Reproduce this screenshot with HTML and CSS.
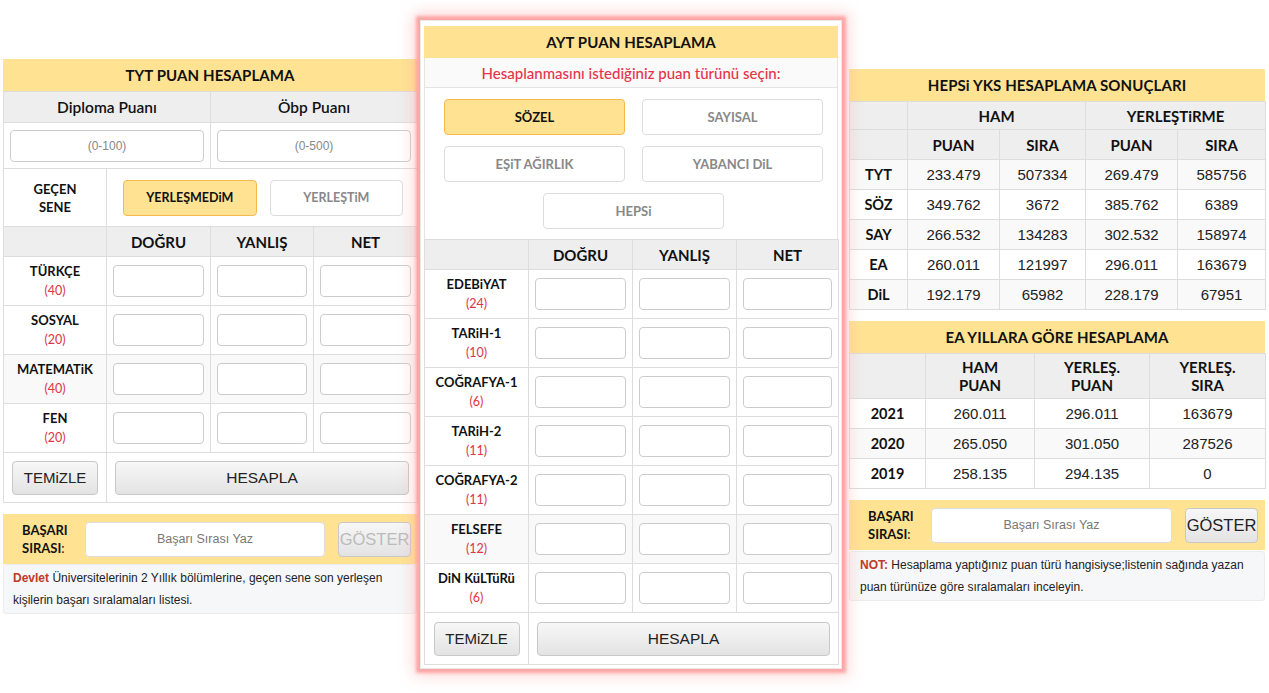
FILE: index.html
```html
<!DOCTYPE html>
<html lang="tr">
<head>
<meta charset="utf-8">
<title>YKS Puan Hesaplama</title>
<link rel="stylesheet" href="styles.css">
</head>
<body>
<div class="page">
  <section class="panel panel-tyt">
    <div class="panel-title">TYT PUAN HESAPLAMA</div>
    <table class="grid grid-4">
      <colgroup><col class="w103"><col class="w104"><col class="w103"><col class="w104"></colgroup>
      <tr class="r-head">
        <th colspan="2" class="big">Diploma Puanı</th>
        <th colspan="2" class="big">Öbp Puanı</th>
      </tr>
      <tr class="r-inputs">
        <td colspan="2"><input class="field field-wide" placeholder="(0-100)"></td>
        <td colspan="2"><input class="field field-wide" placeholder="(0-500)"></td>
      </tr>
      <tr class="r-choice">
        <th class="lbl">GEÇEN<br>SENE</th>
        <td colspan="3">
          <div class="choice">
            <button class="opt active">YERLEŞMEDiM</button>
            <button class="opt">YERLEŞTiM</button>
          </div>
        </td>
      </tr>
      <tr class="r-colhead"><th></th><th>DOĞRU</th><th>YANLIŞ</th><th>NET</th></tr>
      <tr class="r-subj"><th class="lbl">TÜRKÇE<span class="cnt">(40)</span></th><td><input class="field"></td><td><input class="field"></td><td><input class="field"></td></tr>
      <tr class="r-subj"><th class="lbl">SOSYAL<span class="cnt">(20)</span></th><td><input class="field"></td><td><input class="field"></td><td><input class="field"></td></tr>
      <tr class="r-subj alt"><th class="lbl">MATEMATiK<span class="cnt">(40)</span></th><td><input class="field"></td><td><input class="field"></td><td><input class="field"></td></tr>
      <tr class="r-subj"><th class="lbl">FEN<span class="cnt">(20)</span></th><td><input class="field"></td><td><input class="field"></td><td><input class="field"></td></tr>
      <tr class="r-actions">
        <td><button class="btn btn-clear">TEMiZLE</button></td>
        <td colspan="3"><button class="btn btn-calc">HESAPLA</button></td>
      </tr>
    </table>
    <div class="rank-bar">
      <div class="rank-label">BAŞARI<br>SIRASI<span class="colon">:</span></div>
      <input class="rank-input" placeholder="Başarı Sırası Yaz">
      <button class="btn btn-show" disabled>GÖSTER</button>
    </div>
    <div class="note"><div class="note-line"><b class="red">Devlet</b> <span>Üniversitelerinin 2 Yıllık bölümlerine, geçen sene son yerleşen</span></div><div class="note-line">kişilerin başarı sıralamaları listesi.</div></div>
  </section>

  <section class="panel panel-ayt">
    <div class="panel-title">AYT PUAN HESAPLAMA</div>
    <div class="prompt">Hesaplanmasını istediğiniz puan türünü seçin:</div>
    <div class="types">
      <button class="opt active">SÖZEL</button>
      <button class="opt">SAYISAL</button>
      <button class="opt">EŞiT AĞIRLIK</button>
      <button class="opt">YABANCI DiL</button>
      <button class="opt opt-all">HEPSi</button>
    </div>
    <table class="grid grid-4 grid-ayt">
      <colgroup><col class="w104"><col class="w104"><col class="w104"><col class="w102"></colgroup>
      <tr class="r-colhead"><th></th><th>DOĞRU</th><th>YANLIŞ</th><th>NET</th></tr>
      <tr class="r-subj"><th class="lbl">EDEBiYAT<span class="cnt">(24)</span></th><td><input class="field"></td><td><input class="field"></td><td><input class="field"></td></tr>
      <tr class="r-subj"><th class="lbl">TARiH-1<span class="cnt">(10)</span></th><td><input class="field"></td><td><input class="field"></td><td><input class="field"></td></tr>
      <tr class="r-subj"><th class="lbl">COĞRAFYA-1<span class="cnt">(6)</span></th><td><input class="field"></td><td><input class="field"></td><td><input class="field"></td></tr>
      <tr class="r-subj"><th class="lbl">TARiH-2<span class="cnt">(11)</span></th><td><input class="field"></td><td><input class="field"></td><td><input class="field"></td></tr>
      <tr class="r-subj"><th class="lbl">COĞRAFYA-2<span class="cnt">(11)</span></th><td><input class="field"></td><td><input class="field"></td><td><input class="field"></td></tr>
      <tr class="r-subj alt"><th class="lbl">FELSEFE<span class="cnt">(12)</span></th><td><input class="field"></td><td><input class="field"></td><td><input class="field"></td></tr>
      <tr class="r-subj"><th class="lbl">DiN KüLTüRü<span class="cnt">(6)</span></th><td><input class="field"></td><td><input class="field"></td><td><input class="field"></td></tr>
      <tr class="r-actions">
        <td><button class="btn btn-clear">TEMiZLE</button></td>
        <td colspan="3"><button class="btn btn-calc">HESAPLA</button></td>
      </tr>
    </table>
  </section>

  <section class="panel panel-res">
    <div class="panel-title">HEPSi YKS HESAPLAMA SONUÇLARI</div>
    <table class="grid res res-1">
      <colgroup><col class="w58"><col class="w92"><col class="w86"><col class="w92"><col class="w88"></colgroup>
      <tr class="r-h"><th></th><th colspan="2">HAM</th><th colspan="2">YERLEŞTiRME</th></tr>
      <tr class="r-h r-h-b"><th></th><th>PUAN</th><th>SIRA</th><th>PUAN</th><th>SIRA</th></tr>
      <tr class="alt"><th>TYT</th><td>233.479</td><td>507334</td><td>269.479</td><td>585756</td></tr>
      <tr><th>SÖZ</th><td>349.762</td><td>3672</td><td>385.762</td><td>6389</td></tr>
      <tr class="alt"><th>SAY</th><td>266.532</td><td>134283</td><td>302.532</td><td>158974</td></tr>
      <tr><th>EA</th><td>260.011</td><td>121997</td><td>296.011</td><td>163679</td></tr>
      <tr class="alt"><th>DiL</th><td>192.179</td><td>65982</td><td>228.179</td><td>67951</td></tr>
    </table>

    <div class="panel-title title-2">EA YILLARA GÖRE HESAPLAMA</div>
    <table class="grid res res-2">
      <colgroup><col class="w76"><col class="w109"><col class="w115"><col class="w116"></colgroup>
      <tr class="r-h2"><th></th><th>HAM<br>PUAN</th><th>YERLEŞ.<br>PUAN</th><th>YERLEŞ.<br>SIRA</th></tr>
      <tr><th>2021</th><td>260.011</td><td>296.011</td><td>163679</td></tr>
      <tr class="alt"><th>2020</th><td>265.050</td><td>301.050</td><td>287526</td></tr>
      <tr><th>2019</th><td>258.135</td><td>294.135</td><td>0</td></tr>
    </table>

    <div class="rank-bar rank-bar-r">
      <div class="rank-label">BAŞARI<br>SIRASI<span class="colon">:</span></div>
      <input class="rank-input" placeholder="Başarı Sırası Yaz">
      <button class="btn btn-show">GÖSTER</button>
    </div>
    <div class="note note-r"><div class="note-line"><b class="red">NOT:</b> <span>Hesaplama yaptığınız puan türü hangisiyse;listenin sağında yazan</span></div><div class="note-line">puan türünüze göre sıralamaları inceleyin.</div></div>
  </section>
</div>
</body>
</html>
```
FILE: styles.css
```css
* { box-sizing: border-box; }
html, body { margin: 0; padding: 0; background: #fff; }
body {
  font-family: "Lato", "Noto Sans", sans-serif;
  color: #111;
}
.page {
  display: flex;
  align-items: flex-start;
  padding-left: 3px;
  width: 1269px;
  height: 693px;
  overflow: hidden;
}
.panel { flex: none; }
.panel-tyt { width: 414px; margin-top: 59px; margin-right: 3px; }
.panel-ayt {
  width: 422px;
  margin-top: 20px;
  margin-right: 7px;
  padding: 5px 3px 3px;
  background: #fff;
  border: 1px solid #e8e8e8;
  position: relative;
  z-index: 1;
  box-shadow: 0 0 3px 4px rgba(255, 140, 140, 0.7), 0 0 14px 7px rgba(255, 170, 170, 0.45);
}
.panel-res { width: 416px; margin-top: 69px; }

.panel-title {
  background: #ffe393;
  height: 32px;
  line-height: 32px;
  text-align: center;
  font-weight: 700;
  font-size: 15px;
  letter-spacing: 0.1px;
}

.grid {
  width: 100%;
  border-collapse: collapse;
  table-layout: fixed;
}
.grid th, .grid td {
  border: 1px solid #ddd;
  padding: 0;
  text-align: center;
  vertical-align: middle;
}
.grid tr.alt th, .grid tr.alt td { background: #f9f9f9; }
col.w58 { width: 58px; } col.w76 { width: 76px; } col.w86 { width: 86px; }
col.w88 { width: 88px; } col.w92 { width: 92px; } col.w102 { width: 102px; }
col.w103 { width: 103px; } col.w104 { width: 104px; } col.w109 { width: 109px; }
col.w115 { width: 115px; } col.w116 { width: 116px; }

.r-head th {
  background: #eee;
  height: 31px;
  font-size: 15.5px;
  font-weight: 600;
}
.r-inputs td { height: 46px; padding: 0 6px; }
.field {
  display: block;
  width: 100%;
  height: 32px;
  border: 1px solid #ccc;
  border-radius: 4px;
  background: #fff;
  font-family: "Liberation Sans", Arial, sans-serif;
  font-size: 12px;
  text-align: center;
  color: #333;
  outline: none;
}
.field::placeholder { color: #888; }
.r-subj td { padding: 0 6px; }
.r-subj th, .r-subj td { height: 49px; }

.lbl {
  font-size: 13px;
  font-weight: 700;
  line-height: 18px;
}
.cnt {
  display: block;
  font-weight: 400;
  font-size: 12.5px;
  color: #dc3545;
  margin-top: 2px;
}
.r-choice th, .r-choice td { height: 58px; }
.choice {
  display: flex;
  gap: 13px;
  padding: 0 14px 0 16px;
}
.opt {
  flex: 1;
  height: 36px;
  border: 1px solid #ddd;
  border-radius: 4px;
  background: #fff;
  color: #888;
  font-family: "Lato", "Noto Sans", sans-serif;
  font-weight: 700;
  font-size: 12.5px;
  cursor: pointer;
}
.opt.active {
  background: #ffe393;
  border-color: #f5b94f;
  color: #111;
}
.r-colhead th {
  background: #eee;
  height: 30px;
  font-size: 15px;
  font-weight: 700;
}
.r-actions td { height: 50px; padding: 0 8px; }
.btn {
  font-family: "Liberation Sans", Arial, sans-serif;
  color: #222;
  border: 1px solid #c8c8c8;
  border-radius: 4px;
  background: linear-gradient(#f7f7f7, #e3e3e3);
  cursor: pointer;
}
.btn-clear { width: 86px; height: 34px; font-size: 15px; display: block; margin: 0 auto; }
.btn-calc { width: 100%; height: 34px; font-size: 15.5px; display: block; }

.rank-bar {
  display: flex;
  align-items: center;
  gap: 13px;
  height: 50px;
  margin-top: 11px;
  padding: 0 6px 0 19px;
  background: #ffe393;
}
.rank-label {
  width: 50px;
  font-size: 13px;
  font-weight: 700;
  line-height: 18px;
}
.colon { font-weight: 400; }
.rank-input {
  flex: 1;
  height: 35px;
  border: 1px solid #ddd;
  border-radius: 4px;
  background: #fff;
  font-family: "Liberation Sans", Arial, sans-serif;
  font-size: 12.5px;
  text-align: center;
  outline: none;
}
.rank-input::placeholder { color: #777; }
.btn-show {
  width: 73px;
  height: 35px;
  font-size: 16.5px;
  padding: 0;
  color: #222;
}
.btn-show:disabled { color: #bbb; }

.note {
  background: #f6f7f9;
  border: 1px solid #ececec;
  border-radius: 3px;
  padding: 2px 9px 2px;
  font-family: "Liberation Sans", Arial, sans-serif;
  font-size: 12px;
  line-height: 22px;
  color: #222;
}
.note-line { white-space: nowrap; }
.red { color: #c0392b; }
.note-r { padding: 2px 10px 2px; margin-top: 1px; }

/* AYT panel */
.prompt {
  height: 30px;
  line-height: 30px;
  text-align: center;
  background: #fafafa;
  color: #e5344a;
  font-size: 15px;
  font-weight: 500;
  border: 1px solid #e4e4e4;
  border-top: none;
}
.types {
  display: grid;
  grid-template-columns: 181px 181px;
  gap: 11px 17px;
  padding: 11px 17px 10px 19px;
  border-left: 1px solid #e4e4e4;
  border-right: 1px solid #e4e4e4;
}
.types .opt { height: 36px; font-size: 13px; }
.types .opt-all { grid-column: 1 / 3; justify-self: center; width: 181px; }
.grid-ayt .r-actions td { height: 52px; padding: 0 8px; }

/* results */
.res th { font-weight: 700; font-size: 14.5px; }
.res td {
  font-family: "Liberation Sans", Arial, sans-serif;
  font-size: 15px;
  color: #222;
}
.res tr th, .res tr td { height: 30px; }
.res-1 .r-h th { background: #eee; height: 28px; font-size: 15px; }
.res-1 .r-h-b th { height: 30px; }
.res-2 .r-h2 th { background: #eee; height: 45px; font-size: 15px; line-height: 18px; }
.title-2 { margin-top: 11px; }
.rank-bar-r { margin-top: 11px; padding: 0 7px 0 19px; }
```
